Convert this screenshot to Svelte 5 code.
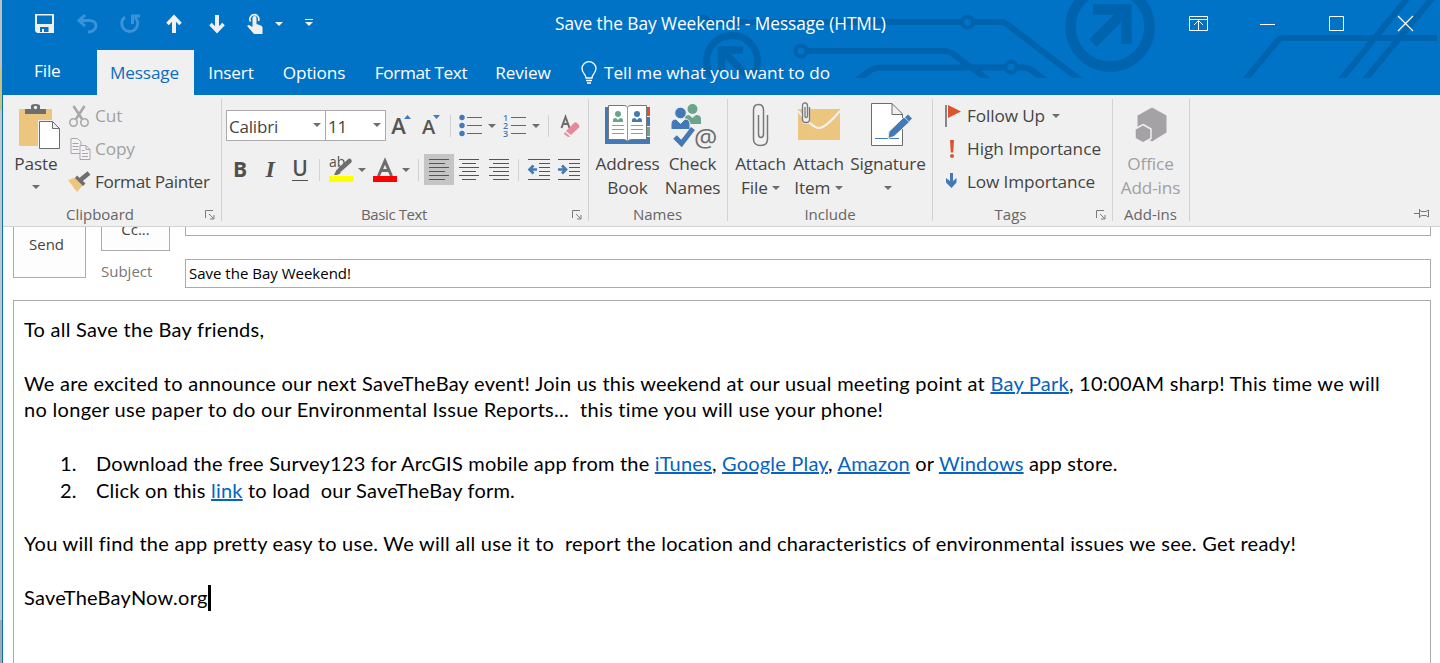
<script lang="ts">
  const tabs = [
    { name: 'Message', width: 97, active: true },
    { name: 'Insert', width: 74 },
    { name: 'Options', width: 92 },
    { name: 'Format Text', width: 122, narrow: true },
    { name: 'Review', width: 82 },
  ];
</script>

<div class="desktop">
  <div class="behind"></div>
  <div class="window">
    <header>
      <svg class="circuit" width="1438" height="78" viewBox="2 0 1438 78" fill="none" stroke="#0063ad" stroke-width="6">
        <path d="M709 22H961M974 22H1001Q1005 22 1008 25L1080 80" />
        <circle cx="703" cy="22" r="5.5" stroke-width="4" />
        <circle cx="967.5" cy="22" r="5.5" stroke-width="4" />
        <path d="M807 51H944Q949 51 953 54L988 80" />
        <circle cx="801" cy="51" r="5.5" stroke-width="4" />
        <path d="M857 80L870 70.5Q875 67.5 880 67.5H1005M1017 67.5H1023Q1028 67.5 1032 70.5L1045 80" />
        <circle cx="1011" cy="67" r="5.5" stroke-width="4" />
        <circle cx="732" cy="61" r="25.5" stroke-width="7" />
        <path d="M743 50H721.5V71M723 51L748 77" stroke-width="7.5" />
        <circle cx="1110" cy="27" r="39.5" stroke-width="10.5" />
        <path d="M1093 9.5H1126.5V44M1125 11L1093 43" stroke-width="10.5" />
        <path d="M1245 80L1277 41.5Q1280 38 1284 38H1437M1339 82L1409 -4M1363 82L1434 -4" />
      </svg>
      <div class="titlebar">
        <div class="quick">
          <svg width="19" height="19" viewBox="0.5 0.5 19 19" fill="#f0f0f0"><path fill-rule="evenodd" d="M.5 .5H19.5V19.5H2.5L.5 17.5ZM2.5 2V10.5H17.5V2ZM5.5 13.5V18.5H7.5V15.5H9.5V18.5H14V13.5Z" /></svg>
          <svg width="22" height="20" viewBox="0 0 22 20" fill="none" stroke="#3c92d6" stroke-width="3"><path d="M9 1L3 6.5L9 12M3 6.5H13C23 6.5 22 17.5 12 18" /></svg>
          <svg width="20" height="20" viewBox="0 0 20 20" fill="none" stroke="#3c92d6" stroke-width="3"><path d="M5 3A8 8 0 1 0 15 3.5M20 2H12.5V10" /></svg>
          <svg width="16" height="20" viewBox="0 0 16 20" fill="none" stroke="#f0f0f0"><path d="M8 3V19" stroke-width="4" /><path d="M1.5 10L8 3L14.5 10" stroke-width="3.5" /></svg>
          <svg width="16" height="20" viewBox="0 0 16 20" fill="none" stroke="#f0f0f0"><path d="M8 1V17" stroke-width="4" /><path d="M1.5 10L8 17L14.5 10" stroke-width="3.5" /></svg>
          <svg width="16" height="22" viewBox="0 0 16 22" fill="#f0f0f0"><path d="M3.5 8.5A4.5 4.5 0 1 1 11.5 8" fill="none" stroke="#f0f0f0" stroke-width="1.7" /><path d="M5.5 5Q5.5 3 7.5 3T9.5 5V11L14 12.5Q16 13.5 15.5 16V21H7L.5 13.5Q0 12 2 12L5.5 14Z" /></svg>
          <svg class="drop" width="8" height="4" viewBox="0 0 8 4" fill="#f0f0f0"><path d="M0 0H8L4 4Z" /></svg>
          <svg class="more" width="8" height="7" viewBox="0 0 8 7" fill="#f0f0f0"><path d="M0 0H8V1H0ZM0 3H8L4 7Z" /></svg>
        </div>
        <h1>Save the Bay Weekend! - Message (HTML)</h1>
        <div class="controls">
          <svg width="19" height="15" viewBox="0 0 19 15" fill="none" stroke="#fff"><path d="M.5 .5H18.5V14.5H.5ZM.5 3.5H18.5M9.5 14V5M5 9L9.5 4.5L14 9" /></svg>
          <svg width="15" height="15" viewBox="0 0 15 15" fill="none" stroke="#fff"><path d="M0 8.5H15" /></svg>
          <svg width="15" height="15" viewBox="0 0 15 15" fill="none" stroke="#fff"><path d="M.5 .5H14.5V14.5H.5Z" /></svg>
          <svg width="15" height="15" viewBox="0 0 15 15" fill="none" stroke="#fff" stroke-width="1.2"><path d="M0 0L15 15M15 0L0 15" /></svg>
        </div>
      </div>
      <nav>
        <span class="file">File</span>
        {#each tabs as tab}
          <span class="tab" class:active={tab.active} class:narrow={tab.narrow} style={`width:${tab.width}px`}>{tab.name}</span>
        {/each}
        <span class="tell">
          <svg width="16" height="23" viewBox="0 0 16 23" fill="none" stroke="#fff" stroke-width="1.3"><path d="M5 17C5 13 1 12 1 7.5A7 6.8 0 0 1 15 7.5C15 12 11 13 11 17ZM5 19.5H11M6 22H10" /></svg>
          <span>Tell me what you want to do</span>
        </span>
      </nav>
    </header>

    <section class="ribbon">
      <div class="group clipboard">
        <div class="content">
          <div class="big paste">
            <svg width="42" height="46" viewBox="0 0 42 46"><path d="M1 5H32Q33 5 33 6V42H1Q0 42 0 41V6Q0 5 1 5Z" fill="#ecc67f" /><path d="M6 10V5H12V2Q12 0 16.5 0T21 2V5H27V10Z" fill="#6d6d6d" /><circle cx="16.5" cy="3.5" r="1.7" fill="#f0f0f0" /><path d="M19 16H34.5L42 23.5V46H19Z" fill="#f0f0f0" /><path d="M20.5 17.5H33.5L40.5 24.5V44.5H20.5ZM33.5 17.5V24.5H40.5" fill="#fff" stroke="#6d6d6d" /></svg>
            <span>Paste</span>
            <i class="caret"></i>
          </div>
          <div class="rows">
            <div class="row off">
              <svg width="22" height="22" viewBox="0 0 22 22" fill="none" stroke="#a8a8a8" stroke-width="1.6"><circle cx="4" cy="17.5" r="3.7" /><circle cx="15" cy="17.5" r="3.7" /><path d="M12.5 14L4 1M6.5 14L15 1" stroke-width="2.6" /></svg>
              <span>Cut</span>
            </div>
            <div class="row off">
              <svg width="22" height="22" viewBox="0 0 22 22" fill="#f5f2f6" stroke="#aaa5ad"><path d="M1.5 .5H8L11.5 4V15.5H1.5ZM3 5.5H9M3 8.5H9M3 11.5H9" /><path d="M10.5 7.5H16.5L20.5 11.5V21.5H10.5ZM16.5 7.5V11.5H20.5M12.5 12.5H15M12.5 15.5H18.5M12.5 18.5H18.5" /></svg>
              <span>Copy</span>
            </div>
            <div class="row">
              <svg width="23" height="22" viewBox="1 0 23 22"><path d="M0 9L9 6L15 14L9 21Z" fill="#ecc67f" /><path d="M9 4.5L17.5 12.5L15 15L7 7Z" fill="#6d6d6d" /><path d="M13 8.5L21 2" stroke="#6d6d6d" stroke-width="4.5" /></svg>
              <span class="narrow">Format Painter</span>
            </div>
          </div>
        </div>
        <footer>Clipboard <svg class="launch" width="10" height="10" viewBox="0 0 10 10" fill="none" stroke="#7a7a7a"><path d="M.5 8V.5H8M4 4L8.5 8.5M9 5V9H5" /></svg></footer>
      </div>

      <div class="group text">
        <div class="content lines">
          <div class="line">
            <div class="combo name"><span>Calibri</span><i class="caret"></i></div>
            <div class="combo size"><span>11</span><i class="caret"></i></div>
            <div class="cell glyph"><b>A</b><svg width="7" height="4" viewBox="0 0 7 4" fill="#4379b4"><path d="M0 4H7L3.5 0Z" /></svg></div>
            <div class="cell glyph small"><b>A</b><svg width="7" height="4" viewBox="0 0 7 4" fill="#4379b4"><path d="M0 0H7L3.5 4Z" /></svg></div>
            <i class="sep"></i>
            <div class="cell"><svg width="23" height="22" viewBox="0 0 23 22"><g fill="#4379b4"><circle cx="3" cy="2.5" r="2.7" /><circle cx="3" cy="10.5" r="2.7" /><circle cx="3" cy="18.5" r="2.7" /></g><path d="M8 2.5H23M8 10.5H23M8 18.5H23" stroke="#666" /></svg></div>
            <i class="caret right"></i>
            <div class="cell num"><svg width="23" height="24" viewBox="0 0 23 24"><g fill="#4379b4" font-size="9" font-family="Open Sans, sans-serif" font-weight="600"><text x="0" y="6.5">1</text><text x="0" y="14.5">2</text><text x="0" y="22.5">3</text></g><path d="M8 3.5H23M8 11.5H23M8 19.5H23" stroke="#666" /></svg></div>
            <i class="caret"></i>
            <i class="sep"></i>
            <div class="cell clear"><svg width="20" height="22" viewBox="0 0 20 22"><path d="M1.5 13L5.5 2L9.5 13M3 9H8.5" fill="none" stroke="#6d6d6d" stroke-width="2" /><path d="M6 16L14 8Q15.5 6.5 17 8L19 10Q20 11 19 12.5L11 20Z" fill="#e8879a" /><path d="M5 17L10 21.5L8 22L4 19Z" fill="#e8879a" /></svg></div>
          </div>
          <div class="line second">
            <div class="cell"><b class="fmt">B</b></div>
            <div class="cell"><b class="fmt ital">I</b></div>
            <div class="cell"><b class="fmt under">U</b></div>
            <i class="sep"></i>
            <div class="cell mark"><svg width="24" height="25" viewBox="0 0 24 25"><text x="0" y="10" font-size="14" font-family="Open Sans, sans-serif" fill="#505050">ab</text><path d="M20.5 4L11 12.5" stroke="#6d6d6d" stroke-width="4.5" stroke-linecap="round" /><path d="M8 12L12 16L8 18H5Z" fill="#6d6d6d" /><path d="M0 19H24V25H0Z" fill="#ff0" /></svg></div>
            <i class="caret"></i>
            <div class="cell color"><svg width="24" height="25" viewBox="0 0 24 25"><path d="M5.5 19L12 4L18.5 19M8 13.5H16" fill="none" stroke="#6d6d6d" stroke-width="3" /><path d="M0 19H24V25H0Z" fill="#f00" /></svg></div>
            <i class="caret"></i>
            <i class="sep"></i>
            <div class="cell on"><svg width="20" height="21" viewBox="0 0 20 21" stroke="#555"><path d="M0 .5H20M0 4.5H16M0 8.5H20M0 12.5H16M0 16.5H20M0 20.5H16" /></svg></div>
            <div class="cell"><svg width="20" height="21" viewBox="0 0 20 21" stroke="#555"><path d="M0 .5H20M3 4.5H17M0 8.5H20M3 12.5H17M0 16.5H20M3 20.5H17" /></svg></div>
            <div class="cell"><svg width="20" height="21" viewBox="0 0 20 21" stroke="#555"><path d="M0 .5H20M4 4.5H20M0 8.5H20M4 12.5H20M0 16.5H20M4 20.5H20" /></svg></div>
            <i class="sep last"></i>
            <div class="cell"><svg width="22" height="21" viewBox="0 0 22 21" stroke="#555"><path d="M0 .5H22M11 4.5H22M11 8.5H22M11 12.5H22M11 16.5H22M0 20.5H22" /><path d="M9 10.5H2M5.5 6.5L1.5 10.5L5.5 14.5" fill="none" stroke="#4379b4" stroke-width="2.6" /></svg></div>
            <div class="cell"><svg width="22" height="21" viewBox="0 0 22 21" stroke="#555"><path d="M0 .5H22M11 4.5H22M11 8.5H22M11 12.5H22M11 16.5H22M0 20.5H22" /><path d="M0 10.5H7M4 6.5L8 10.5L4 14.5" fill="none" stroke="#4379b4" stroke-width="2.6" /></svg></div>
          </div>
        </div>
        <footer><span class="narrow">Basic Text</span> <svg class="launch" width="10" height="10" viewBox="0 0 10 10" fill="none" stroke="#7a7a7a"><path d="M.5 8V.5H8M4 4L8.5 8.5M9 5V9H5" /></svg></footer>
      </div>

      <div class="group names">
        <div class="content">
          <div class="big">
            <svg width="46" height="47" viewBox="0 0 46 47"><path d="M0 4H45V41H0Z" fill="#4379b4" /><path d="M42 4H45V13H42Z" fill="#dc5330" /><path d="M42 24H45V33H42Z" fill="#6aa58b" /><path d="M41 13H45V14H41ZM41 23H45V24H41ZM41 33H45V34H41Z" fill="#f0f0f0" /><path d="M3.5 2.5H18Q22.5 2.5 22.5 5Q22.5 2.5 27 2.5H41.5V36.5H27Q23 36.5 22.5 39Q22 36.5 18 36.5H3.5Z" fill="#fff" stroke="#777" /><path d="M22.5 4V38" stroke="#999" /><g fill="#6aa58b"><circle cx="13" cy="11" r="3" /><path d="M8 19V17Q8 15 11 15L13 17L15 15Q18 15 18 17V19Z" /></g><g fill="#4379b4"><circle cx="32" cy="11" r="3" /><path d="M27 19V17Q27 15 30 15L32 17L34 15Q37 15 37 17V19Z" /></g><path d="M7 22.5H19M7 26.5H19M7 30.5H19M26 22.5H38M26 26.5H38M26 30.5H38" stroke="#999" /></svg>
            <span>Address<br />Book</span>
          </div>
          <div class="big check">
            <svg width="46" height="47" viewBox="0 0 46 47"><g fill="#6aa58b"><circle cx="21.5" cy="6" r="5" /><path d="M14 15Q14 12 18 12L21.5 15L25 12Q30 12 30 16V21H18Z" /></g><g fill="#4379b4" stroke="#f0f0f0"><circle cx="9.5" cy="10" r="5.8" /><path d="M0 26.5V21.5Q0 16 5 16L9.5 20.5L14 16Q19 16 19 21.5V26.5Z" /></g><path d="M4 34L10.5 40.5L22 25.5" fill="none" stroke="#4379b4" stroke-width="5" /><text x="23" y="44" font-size="26" font-family="Open Sans, sans-serif" fill="#6d6d6d">@</text></svg>
            <span>Check<br />Names</span>
          </div>
        </div>
        <footer>Names</footer>
      </div>

      <div class="group include">
        <div class="content">
          <div class="big att">
            <svg width="20" height="47" viewBox="0 0 20 47" fill="none" stroke="#777" stroke-width="1.5"><path d="M16.5 12V36Q16.5 42.5 9.5 42.5T2.5 36V7Q2.5 1.5 7.5 1.5T12.5 7V31Q12.5 34.5 10 34.5T7.5 31V12" /></svg>
            <span>Attach<br />File <i class="caret"></i></span>
          </div>
          <div class="big item">
            <svg width="44" height="47" viewBox="0 0 44 47" fill="none"><path d="M1 6H43V37H1Z" fill="#ecc67f" /><path d="M1 8C8 16 16 25 22 25S36 16 43 8" stroke="#f0f0f0" stroke-width="2" /><path d="M5 3Q5 -1 9 -1T13 3V18Q13 21 9 21T5 18Z" fill="#f0f0f0" /><path d="M12.5 4V16.5Q12.5 19.5 9 19.5T5.5 16.5V3Q5.5 -.2 8 -.2T10.5 3V13Q10.5 14.5 9.2 14.5T8 13V4" stroke="#777" stroke-width="1.3" /></svg>
            <span>Attach<br />Item <i class="caret"></i></span>
          </div>
          <div class="big sig">
            <svg width="42" height="47" viewBox="0 0 42 47"><path d="M1.5 .5H22L32.5 11V42.5H1.5ZM22 .5V11.5H32.5" fill="#fff" stroke="#6d6d6d" /><path d="M5 35.5H29" stroke="#4379b4" /><path d="M18 35.5L19 28.5L34 14L39.5 19L24 33.5Z" fill="#4379b4" stroke="#f0f0f0" /><path d="M35 14.5L38 11.5L42 15.5L39 18.5Z" fill="#4379b4" /></svg>
            <span>Signature<br /><i class="caret"></i></span>
          </div>
        </div>
        <footer>Include</footer>
      </div>

      <div class="group tags">
        <div class="content">
          <div class="rows">
            <div class="row">
              <svg width="16" height="22" viewBox="0 0 16 22"><path d="M2 0V22" stroke="#6d6d6d" stroke-width="1.6" /><path d="M4 0L17 6.5L4 13Z" fill="#dc5330" /></svg>
              <span>Follow Up</span><i class="caret"></i>
            </div>
            <div class="row">
              <svg width="16" height="22" viewBox="0 0 16 22" fill="#dc5330"><path d="M6 2H10L9.2 14.5H6.8Z" /><circle cx="8" cy="18" r="2" /></svg>
              <span>High Importance</span>
            </div>
            <div class="row">
              <svg width="16" height="22" viewBox="0 0 16 22" fill="#4379b4"><path d="M6 2H9V10L12.5 7V11.5L7.5 17L2 11.5V7L6 10Z" /></svg>
              <span>Low Importance</span>
            </div>
          </div>
        </div>
        <footer>Tags <svg class="launch" width="10" height="10" viewBox="0 0 10 10" fill="none" stroke="#7a7a7a"><path d="M.5 8V.5H8M4 4L8.5 8.5M9 5V9H5" /></svg></footer>
      </div>

      <div class="group addins">
        <div class="content">
          <div class="big off">
            <svg width="32" height="47" viewBox="0 0 32 47" fill="#a5a2a5"><path d="M17 4.5L31.5 12.5V29.5L17 38.5L2.5 29.5V12.5Z" /><path d="M8 21.5L16 26V35.5L8 40L0 35.5V26Z" stroke="#f0f0f0" stroke-width="1.5" /></svg>
            <span>Office<br />Add-ins</span>
          </div>
        </div>
        <footer>Add-ins</footer>
      </div>
      <svg class="pin" width="15" height="9" viewBox="0 0 15 9" fill="none" stroke="#777"><path d="M0 4.5H5M5.5 0V9M5.5 1.5L8 2.5H12L14.5 1V8L12 6.5H8L5.5 7.5" /></svg>
    </section>

    <section class="envelope">
      <div class="send">Send</div>
      <div class="fields">
        <div class="field"><div class="cc">Cc...</div><div class="input cut"></div></div>
        <div class="field"><label for="subject">Subject</label><div class="input" id="subject">Save the Bay Weekend!</div></div>
      </div>
    </section>

    <article>
      <p>To all Save the Bay friends,</p>
      <p>We are excited to announce our next SaveTheBay event! Join us this weekend at our usual meeting point at <a href="#park">Bay Park</a>, 10:00AM sharp! This time we will<br /><span class="wide">no longer use paper to do our Environmental Issue Reports...&nbsp; this time you will use your phone!</span></p>
      <ol>
        <li><b>1.</b><span>Download the free Survey123 for ArcGIS mobile app from the <a href="#itunes">iTunes</a>, <a href="#play">Google Play</a>, <a href="#amazon">Amazon</a> or <a href="#windows">Windows</a> app store.</span></li>
        <li><b>2.</b><span>Click on this <a href="#form">link</a> to load&nbsp; our SaveTheBay form.</span></li>
      </ol>
      <p>You will find the app pretty easy to use. We will all use it to&nbsp; report the location and characteristics of environmental issues we see. Get ready!</p>
      <p>SaveTheBayNow.org<i class="cursor"></i></p>
    </article>
  </div>
</div>

<style>
  :global(body) { margin: 0; overflow: hidden; }
  .desktop { display: flex; width: 1440px; height: 663px; overflow: hidden; background: #fff; font-family: "Open Sans", "Noto Sans", sans-serif; color: #444; }
  .behind { width: 2px; background: linear-gradient(#bfbfbf 67px, #c9c27f 67px 110px, #c6c6c6 110px 620px, #a9a9a9 620px); }
  .window { flex: 1; display: flex; flex-direction: column; min-width: 0; border-left: 1px solid #0173c7; }
  svg { display: block; flex: none; overflow: visible; }
  .caret { display: inline-block; flex: none; width: 0; height: 0; border: 4px solid transparent; border-top-color: #6d6d6d; border-bottom: 0; }
  .narrow { letter-spacing: -.38px !important; }

  header { position: relative; height: 95px; background: #0173c7; color: #fff; }
  .circuit { position: absolute; left: -1px; top: 0; overflow: hidden; }
  .titlebar { position: relative; display: flex; align-items: center; height: 47px; }
  .quick { display: flex; align-items: center; width: 552px; padding-left: 32px; box-sizing: border-box; }
  .quick svg { margin-right: 24px; }
  .quick svg:nth-child(2) { margin: 0 22px 0 -2px; }
  .quick svg:nth-child(3) { margin-right: 26px; }
  .quick svg:nth-child(4) { margin-right: 27px; }
  .quick svg:nth-child(5) { margin-right: 22px; }
  .quick svg:nth-child(6) { margin-right: 12px; }
  .quick svg.drop { margin-right: 22px; }
  .quick svg.more { margin: 0 0 2px; }
  h1 { flex: 1; margin: 0; font-size: 17.3px; font-weight: 400; white-space: nowrap; letter-spacing: -.06px; }
  .controls { display: flex; gap: 52px; padding-right: 27px; }
  .controls svg:nth-child(3), .controls svg:nth-child(4) { margin-left: 2px; }
  nav { position: relative; display: flex; height: 48px; padding-top: 3px; box-sizing: border-box; font-size: 17.2px; line-height: 46px; letter-spacing: -.15px; white-space: nowrap; }
  .file { width: 94px; padding-left: 31px; box-sizing: border-box; line-height: 42px; }
  .tab { text-align: center; }
  .active { background: #f0f0f0; color: #0f6cbd; text-indent: -2px; }
  .tell { display: flex; align-items: center; gap: 7px; padding-left: 17px; letter-spacing: 0; }

  .ribbon { display: flex; position: relative; height: 132px; padding-top: 4px; box-sizing: border-box; border-bottom: 1px solid #d2d2d2; background: #f0f0f0; font-size: 17.2px; letter-spacing: -.12px; }
  .group { height: 122px; box-sizing: border-box; border-right: 1px solid #d2d2d2; }
  .content { display: flex; height: 103px; }
  .group footer { position: relative; height: 24px; line-height: 24px; font-size: 15px; letter-spacing: 0; text-align: center; color: #666; }
  .launch { position: absolute; right: 6px; top: 8px; }
  .clipboard { width: 219px; }
  .clipboard footer { padding-right: 24px; }
  .text { width: 367px; }
  .text footer { padding-right: 22px; }
  .names { width: 139px; }
  .names footer, .addins footer { padding-right: 1px; }
  .include { width: 205px; }
  .tags { width: 180px; }
  .tags footer { padding-right: 24px; }
  .addins { width: 77px; }
  .big { display: flex; flex-direction: column; align-items: center; padding-top: 4px; line-height: 24px; text-align: center; white-space: nowrap; }
  .big > svg { margin: 0 0 2px; }
  .big span .caret { vertical-align: 4px; }
  .paste { width: 66px; }
  .paste > svg { margin: 1px 0 2px 7px; }
  .paste .caret { margin-top: 9px; }
  .rows { display: flex; flex-direction: column; }
  .row { display: flex; align-items: center; height: 33px; gap: 5px; white-space: nowrap; }
  .row span { margin-top: -1px; }
  .clipboard .row svg { width: 23px; }
  .clipboard .row { gap: 3px; }
  .off { color: #a0a0a0; }
  .names .big { width: 77px; }
  .names .check { width: 53px; }
  .check > svg { margin-left: 3px; }
  .include .att { width: 65px; }
  .include .item { width: 51px; }
  .include .sig { width: 88px; }
  .sig > svg { margin-left: 5px; }
  .tags .row { padding-left: 11px; gap: 7px; }
  .tags .row:nth-child(2) { letter-spacing: 0; }
  .addins .big { width: 75px; }
  .lines { flex-direction: column; padding: 11px 0 0 4px; box-sizing: border-box; }
  .line { display: flex; align-items: center; height: 31px; }
  .second { margin: 13px 0 0 -1px; }
  .combo { display: flex; align-items: center; justify-content: space-between; height: 31px; padding: 2px 4px 0 2px; box-sizing: border-box; border: 1px solid #ababab; background: #fff; letter-spacing: -.2px; font-size: 17px; }
  .combo .caret { margin-top: -3px; }
  .name { width: 100px; }
  .size { width: 61px; margin-left: -1px; }
  .cell { display: flex; align-items: center; justify-content: center; width: 30px; height: 31px; }
  .sep { width: 1px; height: 22px; margin: 0 4px; background: #d2d2d2; }
  .last { margin-right: 5px; }
  .glyph { align-items: flex-start; font-size: 22px; line-height: 31px; color: #555; }
  .glyph b { font-weight: 600; }
  .glyph svg { margin: 5px 0 0 -2px; }
  .small { font-size: 20px; }
  .small b { margin-top: 1px; }
  .line > .caret { margin: 0 4px 0 2px; }
  .line > .right { margin: 0 3px; }
  .num { width: 31px; }
  .clear { width: 34px; }
  .fmt { font-size: 21px; line-height: 26px; margin-top: -1px; color: #505050; }
  .ital { font-family: "Liberation Serif", serif; font-style: italic; font-size: 24px; }
  .under { font-weight: 600; height: 22px; line-height: 21px; margin-top: 0; border-bottom: 1px solid #505050; }
  .mark { width: 32px; }
  .mark svg { margin-left: 2px; }
  .on { margin-left: 1px; background: #c5c5c5; }
  .pin { position: absolute; right: 11px; bottom: 8px; }

  .envelope { display: flex; height: 73px; overflow: hidden; font-size: 15px; }
  .send { width: 73px; height: 51px; margin-left: 10px; padding-right: 6px; box-sizing: border-box; border: 1px solid #ababab; border-top: 0; background: #fdfdfd; line-height: 34px; text-align: center; }
  .fields { flex: 1; padding: 0 9px 0 15px; }
  .field { display: flex; height: 32px; }
  .cc { width: 69px; height: 24px; margin-right: 15px; box-sizing: border-box; border: 1px solid #ababab; border-top: 0; background: #fdfdfd; line-height: 4px; text-align: center; overflow: hidden; }
  .input { flex: 1; height: 29px; padding-left: 3px; box-sizing: border-box; border: 1px solid #ababab; background: #fff; line-height: 27px; color: #000; }
  .input.cut { height: 9px; border-top: 0; }
  label { width: 84px; line-height: 24px; color: #777; }

  article { flex: 1; margin: 0 9px 0 10px; padding: 15px 10px 0; border: 1px solid #ababab; border-bottom: 0; font-family: Lato, "Open Sans", sans-serif; font-size: 20px; line-height: 26.8px; letter-spacing: .255px; color: #000; white-space: nowrap; }
  p, ol { margin: 0 0 26.8px; }
  ol { padding-left: 36px; list-style: none; letter-spacing: .2px; }
  li { display: flex; }
  li b { width: 36px; font-weight: 400; }
  a { color: #0563c1; }
  .wide { letter-spacing: .3px; }
  .cursor { display: inline-block; width: 3px; height: 26px; vertical-align: -6px; background: #000; }
</style>
